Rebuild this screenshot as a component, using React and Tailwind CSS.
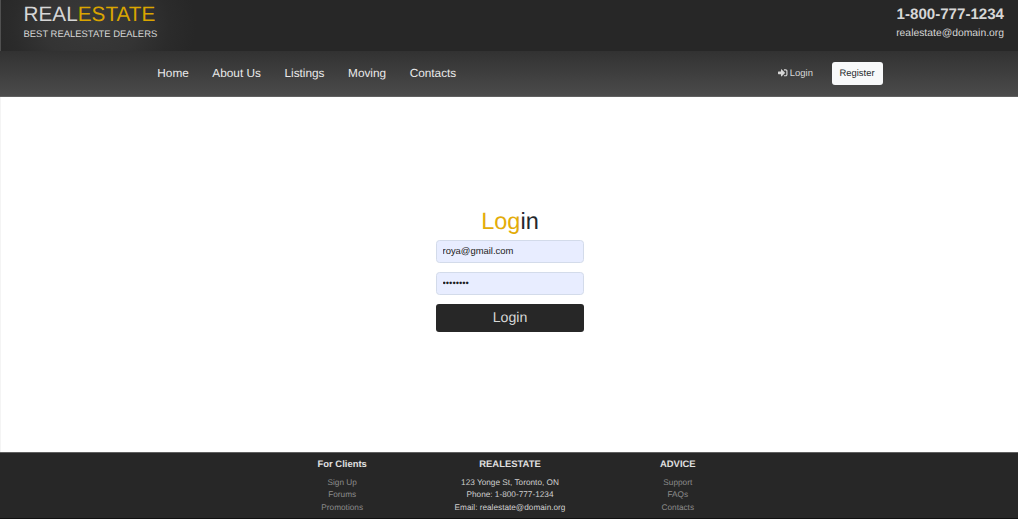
import React from "react";
import { FaSignInAlt } from "react-icons/fa";

function Header() {
  return (
    <header className="flex h-[51px] items-start justify-between border-l border-[#505050] bg-[radial-gradient(ellipse_105px_80px_at_90px_25px,#393939_0%,#343434_45%,#2b2b2b_75%,#272727_100%)] bg-[#272727] pl-[22.5px] pr-[14px] text-[#d6d6d6]">
      <div>
        <h1 className="mt-[2px] text-[20.75px] leading-[26px]">
          REAL<span className="text-[#daa500]">ESTATE</span>
        </h1>
        <p className="text-[9.45px] leading-[14px]">BEST REALESTATE DEALERS</p>
      </div>
      <div className="text-right">
        <p className="mt-[6px] text-[15.1px] leading-[18px] font-bold">1-800-777-1234</p>
        <p className="mt-[3px] text-[10.37px] leading-[14px]">realestate@domain.org</p>
      </div>
    </header>
  );
}

const links = ["Home", "About Us", "Listings", "Moving", "Contacts"];

function Nav() {
  return (
    <nav className="flex h-[46px] items-center justify-between border-b border-[#606060] bg-linear-to-b from-[#323232] to-[#4b4b4b] pr-[135.5px] pl-[157.3px]">
      <ul className="flex gap-[23.6px] pb-px text-[11.8px] leading-[18px] text-[#eaeaea]">
        {links.map((l) => (
          <li key={l}>{l}</li>
        ))}
      </ul>
      <div className="flex items-center text-[9.43px]">
        <a className="mr-[18.6px] flex items-center gap-[2.3px] text-[#d6d6d6]">
          <FaSignInAlt className="mb-px size-[9.5px]" />
          Login
        </a>
        <button className="h-[23px] w-[51px] rounded-[3px] bg-[#f8f9fa] text-[#272b2f]">
          Register
        </button>
      </div>
    </nav>
  );
}

function LoginForm() {
  const field =
    "block h-[23px] w-full rounded-[3.5px] border border-[#d3dbea] bg-[#e8edff] px-[6px] pb-[2px] text-[9.43px] text-[#1c1c20] outline-none";
  return (
    <main className="flex h-[355px] justify-center border-l border-[#f4f4f4] bg-white pt-[110px]">
      <form className="w-[148px]">
        <h2 className="mb-[4px] pl-px text-center text-[23.5px] leading-[29px] text-[#24282c]">
          <span className="text-[#e3ac09]">Log</span>in
        </h2>
        <input className={field} type="email" defaultValue="roya@gmail.com" />
        <input className={field + " mt-[8.5px]"} type="password" defaultValue="password" />
        <button
          type="button"
          className="mt-[9.5px] block h-[28px] w-full rounded-[3px] bg-[#272727] pb-px pl-px text-[14.13px] leading-[27px] text-[#d6d6d6]"
        >
          Login
        </button>
      </form>
    </main>
  );
}

const columns = [
  { title: "For Clients", items: ["Sign Up", "Forums", "Promotions"], tone: "text-[#8c8c8c]" },
  {
    title: "REALESTATE",
    items: ["123 Yonge St, Toronto, ON", "Phone: 1-800-777-1234", "Email: realestate@domain.org"],
    tone: "text-[#cfcfcf]",
  },
  { title: "ADVICE", items: ["Support", "FAQs", "Contacts"], tone: "text-[#8c8c8c]" },
];

function Footer() {
  return (
    <footer className="flex h-[67px] justify-center border-t border-b border-t-[#606060] border-b-[#111111] bg-[#272727] pl-[2px] pt-[3.5px] text-center">
      {columns.map((c) => (
        <section key={c.title} className="w-[167.8px]">
          <h3 className="mb-[7px] text-[9.43px] leading-[13px] font-bold text-[#e0e0e0]">{c.title}</h3>
          {c.items.map((i) => (
            <p key={i} className={"text-[8.24px] leading-[12.8px] " + c.tone}>
              {i}
            </p>
          ))}
        </section>
      ))}
    </footer>
  );
}

export default function App() {
  return (
    <div className="h-[519px] w-full overflow-hidden bg-white font-['Liberation_Sans',Arial,sans-serif] [text-rendering:geometricPrecision] [&_button]:[text-rendering:geometricPrecision] [&_input]:[text-rendering:geometricPrecision]">
      <Header />
      <Nav />
      <LoginForm />
      <Footer />
    </div>
  );
}
